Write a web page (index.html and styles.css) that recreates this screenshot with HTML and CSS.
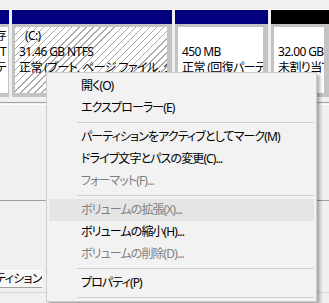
FILE: index.html
```html
<!DOCTYPE html>
<html lang="ja">
<head>
  <meta charset="UTF-8" />
  <title>ディスクの管理</title>
  <link rel="stylesheet" href="styles.css">
</head>
<body>
  <div class="screen">
    <div class="topstrip"></div>

    <div class="disk">
      <div class="part part-edge">
        <div class="bar"></div>
        <div class="box">
          <p>保存</p>
          <p>NT</p>
          <p>テ</p>
        </div>
      </div>
      <div class="part part-c">
        <div class="bar"></div>
        <div class="box hatched">
          <p class="label">(C:)</p>
          <p>31.46 GB NTFS</p>
          <p>正常 (ブート, ページ ファイル, クラッシュ ダンプ, プライマリ パーティション)</p>
        </div>
      </div>
      <div class="part part-rec">
        <div class="bar"></div>
        <div class="box">
          <p>&nbsp;</p>
          <p>450 MB</p>
          <p>正常 (回復パーティション)</p>
        </div>
      </div>
      <div class="part part-free">
        <div class="bar black"></div>
        <div class="box">
          <p>&nbsp;</p>
          <p>32.00 GB</p>
          <p>未割り当て</p>
        </div>
      </div>
    </div>

    <div class="rule-double"></div>
    <div class="rule-mid"></div>
    <div class="legend">
      <span class="legend-text">プライマリ パーティション</span>
    </div>
    <div class="rule-bottom"></div>

    <div class="menu">
      <div class="item">開く(O)</div>
      <div class="item">エクスプローラー(E)</div>
      <div class="sep"></div>
      <div class="item">パーティションをアクティブとしてマーク(M)</div>
      <div class="item">ドライブ文字とパスの変更(C)...</div>
      <div class="item disabled">フォーマット(F)...</div>
      <div class="sep"></div>
      <div class="item disabled hover">ボリュームの拡張(X)...</div>
      <div class="item">ボリュームの縮小(H)...</div>
      <div class="item disabled">ボリュームの削除(D)...</div>
      <div class="sep"></div>
      <div class="item">プロパティ(P)</div>
      <div class="sep"></div>
    </div>
  </div>
</body>
</html>
```

FILE: styles.css
```css
* {
  box-sizing: border-box;
}
body {
  margin: 0;
  background-color: #f0f0f0;
  font-family: "Noto Sans", "Noto Sans CJK JP", sans-serif;
  font-size: 12px;
  color: #000;
  font-feature-settings: "palt";
  letter-spacing: -0.6px;
}
p {
  margin: 0;
}
.screen {
  position: relative;
  width: 329px;
  height: 303px;
  overflow: hidden;
}
.topstrip {
  height: 10px;
  border-bottom: 1px solid #fafafa;
}
.disk {
  display: flex;
  gap: 3px;
  height: 87px;
}
.part {
  display: flex;
  flex-direction: column;
}
.part-edge {
  width: 9px;
}
.part-c {
  width: 160px;
}
.part-rec {
  width: 93px;
}
.part-free {
  flex: 1;
  min-width: 0;
}
.bar {
  height: 14px;
  background-color: #000080;
}
.bar.black {
  background-color: #000;
}
.box {
  flex: 1;
  background-color: #fff;
  border: 3px solid #c3c3c3;
  border-right-width: 5px;
  border-bottom-width: 4px;
  padding: 1px 0 0 4px;
  line-height: 16px;
  white-space: nowrap;
  overflow: hidden;
}
.part-edge .box {
  border-left: 0;
  border-right-width: 1px;
  padding: 1px 2px 0 0;
  text-align: right;
  direction: rtl;
}
.hatched {
  background: repeating-linear-gradient(135deg, #ababab 0 1px, #fff 1px 5px);
}
.label {
  padding-left: 6px;
}

.rule-double {
  margin-top: 5px;
  height: 3px;
  border-top: 1px solid #a0a0a0;
  border-bottom: 1px solid #fdfdfd;
}
.rule-mid {
  margin-top: 95px;
  height: 1px;
  background-color: #a0a0a0;
}
.legend {
  margin-top: 69px;
  width: 42px;
  height: 18px;
  border-top: 1px solid #fff;
  border-bottom: 1px solid #a0a0a0;
  background-color: #f7f7f7;
  line-height: 16px;
  white-space: nowrap;
  overflow: hidden;
  direction: rtl;
}
.rule-bottom {
  margin-top: 4px;
  height: 1px;
  background-color: #d4d4d4;
}

/* context menu */
.menu {
  position: absolute;
  left: 46px;
  top: 72px;
  width: 271px;
  padding: 2px 2px 0;
  background-color: #f2f2f2;
  border: 1px solid #cccccc;
  box-shadow: 3px 3px 3px rgba(0,0,0,0.3);
  letter-spacing: -0.9px;
}
.item {
  height: 22px;
  line-height: 22px;
  padding-left: 32px;
  white-space: nowrap;
}
.item.disabled {
  color: #808080;
}
.item.hover {
  background-color: #e5e5e5;
}
.sep {
  height: 7px;
  margin-left: 28px;
  border-top: 3px solid transparent;
  border-bottom: 3px solid transparent;
  background-color: #d0d0d0;
  background-clip: padding-box;
}
```
